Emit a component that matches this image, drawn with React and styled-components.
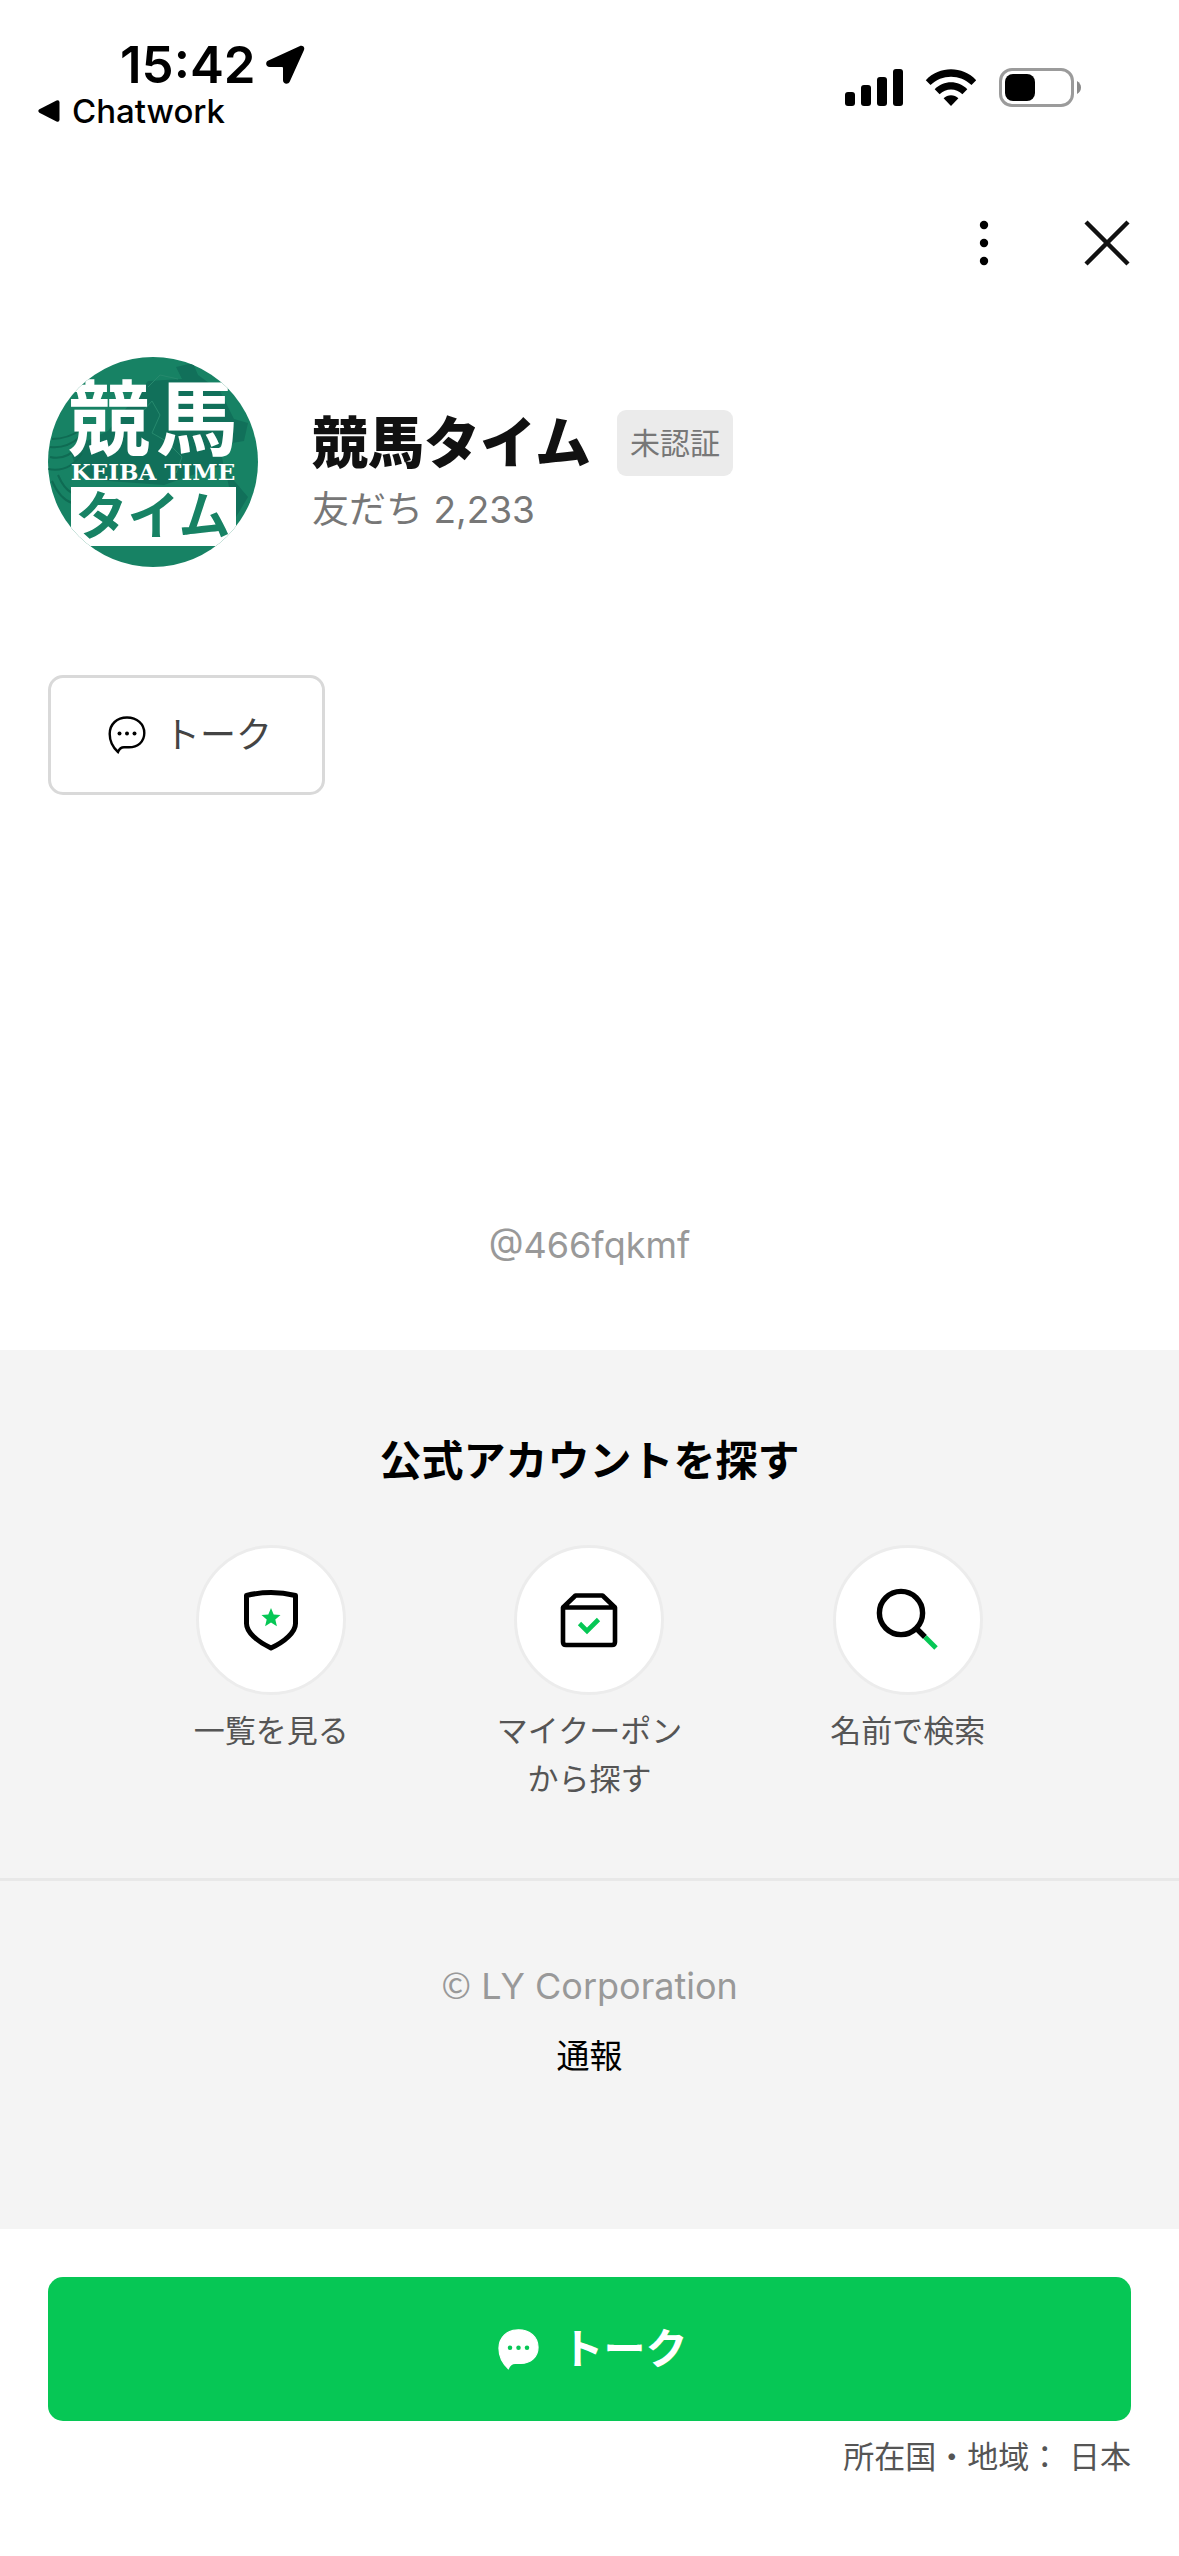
import React from "react";
import styled, { createGlobalStyle } from "styled-components";

const shortcuts = [
  { label: ["一覧を見る"], icon: ShieldIcon },
  { label: ["マイクーポン", "から探す"], icon: CouponIcon },
  { label: ["名前で検索"], icon: SearchIcon }
];

export default function App() {
  return (
    <Page>
      <GlobalStyle />
      <StatusBar>
        <StatusLeft>
          <Clock>
            15:42
            <LocationIcon />
          </Clock>
          <BackLink href="#chatwork">
            <BackIcon />
            Chatwork
          </BackLink>
        </StatusLeft>
        <StatusRight>
          <SignalIcon />
          <WifiIcon />
          <BatteryIcon />
        </StatusRight>
      </StatusBar>

      <Header>
        <IconButton type="button" aria-label="メニュー">
          <MoreIcon />
        </IconButton>
        <IconButton type="button" aria-label="閉じる">
          <CloseIcon />
        </IconButton>
      </Header>

      <Main>
        <Profile>
          <Avatar />
          <ProfileText>
            <NameRow>
              <Name>競馬タイム</Name>
              <Badge>未認証</Badge>
            </NameRow>
            <Friends>友だち 2,233</Friends>
          </ProfileText>
        </Profile>
        <TalkButton type="button">
          <TalkIcon />
          トーク
        </TalkButton>
        <AccountId>@466fqkmf</AccountId>
      </Main>

      <Explore>
        <ExploreTitle>公式アカウントを探す</ExploreTitle>
        <Shortcuts>
          {shortcuts.map(({ label, icon: Icon }) => (
            <Shortcut key={label[0]} href="#explore">
              <Circle>
                <Icon />
              </Circle>
              {label.map(line => (
                <span key={line}>{line}</span>
              ))}
            </Shortcut>
          ))}
        </Shortcuts>
      </Explore>

      <Legal>
        <Copyright>
          <CopyrightSign>©</CopyrightSign> LY Corporation
        </Copyright>
        <Report href="#report">通報</Report>
      </Legal>

      <BottomBar>
        <TalkButton type="button" $primary>
          <TalkIcon filled />
          トーク
        </TalkButton>
        <Region>所在国・地域： 日本</Region>
      </BottomBar>
    </Page>
  );
}

function LocationIcon() {
  return (
    <svg width="40" height="40" viewBox="0 0 40 40" aria-hidden="true">
      <path d="M34.5 1.2C37.6-.2 40.3 2 38.9 5.3L24.8 36.5C23.2 40 18 39.2 18 35.2V23Q18 22 17 22H4.8C.8 22-.2 17 3.4 15.5Z" />
    </svg>
  );
}

function BackIcon() {
  return (
    <svg width="22" height="22" viewBox="0 0 22 22" aria-hidden="true">
      <path d="M1.4 9.3 18.5.5Q21.5-.4 21.5 2.6V19.4Q21.5 22.4 18.5 21.5L1.4 12.7Q-.8 11 1.4 9.3Z" />
    </svg>
  );
}

function SignalIcon() {
  return (
    <svg width="58" height="38" viewBox="0 0 58 38" aria-hidden="true">
      <rect x="0" y="23" width="10" height="14" rx="3" />
      <rect x="16" y="16" width="10" height="21" rx="3" />
      <rect x="32" y="8" width="10" height="29" rx="3" />
      <rect x="48" y="0" width="10" height="37" rx="3" />
    </svg>
  );
}

function WifiIcon() {
  return (
    <svg width="52" height="38" viewBox="0 0 52 38" aria-hidden="true">
      <path d="M.8 11.2C14.5-3.3 37.5-3.3 51.2 11.2L46.5 16C35.2 4.9 16.8 4.9 5.5 16Z" />
      <path d="M9.7 20.2C18.7 11 33.3 11 42.3 20.2L37.4 25.2C31.2 18.9 20.8 18.9 14.6 25.2Z" />
      <path d="M18.6 29.2C22.7 25.1 29.3 25.1 33.4 29.2L26 37Z" />
    </svg>
  );
}

function BatteryIcon() {
  return (
    <svg width="82" height="40" viewBox="0 0 82 40" aria-hidden="true">
      <rect
        x="1.5"
        y="1.5"
        width="72"
        height="36"
        rx="11.5"
        fill="none"
        stroke="#9b9b9b"
        strokeWidth="3"
      />
      <rect x="6" y="6" width="30" height="27" rx="8" />
      <path d="M78 13Q82 15.5 82 19.5T78 26Z" fill="#8a8a8a" />
    </svg>
  );
}

function MoreIcon() {
  return (
    <svg width="48" height="48" viewBox="0 0 48 48" aria-hidden="true">
      <circle cx="24" cy="6" r="4.2" />
      <circle cx="24" cy="24" r="4.2" />
      <circle cx="24" cy="42" r="4.2" />
    </svg>
  );
}

function CloseIcon() {
  return (
    <svg width="48" height="48" viewBox="0 0 48 48" aria-hidden="true">
      <path d="M3 3 45 45M45 3 3 45" stroke="#111" strokeWidth="4.4" />
    </svg>
  );
}

function Avatar() {
  return (
    <AvatarSvg viewBox="0 0 210 210" role="img" aria-label="競馬タイム KEIBA TIME">
      <clipPath id="avatar">
        <circle cx="105" cy="105" r="105" />
      </clipPath>
      <g clipPath="url(#avatar)">
        <rect width="210" height="210" fill="#178264" />
        <g fill="#11705a">
          <path d="M128 10 145 6 150 18 172 34 186 62 200 66 196 84 172 88 176 112 200 140 188 160 176 108 150 116 116 128 60 124 30 118 22 92 60 74 84 44 100 24 134 22Z" />
        </g>
        <g fill="none" stroke="#0f6b53" strokeWidth="2">
          <path d="M0 112Q22 116 34 96M2 100Q18 104 32 88M2 90Q18 92 32 80M4 82Q20 82 34 72" />
          <path d="M4 124Q12 142 24 146M10 118Q16 132 24 136" />
        </g>
        <g fill="none" stroke="#27896d" strokeWidth="1">
          <path d="M88 62 104 44 112 58 104 76 118 84 134 100 128 116M100 30 112 18 130 22" />
        </g>
        <LogoText x="61" y="92" fontSize="82" fill="#fff">
          競
        </LogoText>
        <LogoText x="149" y="92" fontSize="82" fill="#fff">
          馬
        </LogoText>
        <LogoLatin x="105" y="123">
          KEIBA TIME
        </LogoLatin>
        <rect x="23" y="130" width="165" height="59" fill="#fff" />
        <LogoText x="105" y="178" fontSize="52" fill="#178264">
          タイム
        </LogoText>
      </g>
    </AvatarSvg>
  );
}

function TalkIcon({ filled }) {
  const size = filled ? 43 : 38;
  return (
    <svg width={size} height={size} viewBox="0 0 38 38" aria-hidden="true">
      <path
        d="M19 1.5C29 1.5 36.3 8 36.3 17C36.3 26 29.5 31.3 21 31.3H16C13 31.3 11.5 32.5 10 36C5 31.5 1.7 25 1.7 18C1.7 8 9 1.5 19 1.5Z"
        fill={filled ? "#fff" : "none"}
        stroke={filled ? "#fff" : "#000"}
        strokeWidth={filled ? 1 : 2.4}
      />
      <g fill={filled ? "#06c755" : "#000"}>
        <circle cx="11.5" cy="17.5" r="2" />
        <circle cx="19" cy="17.5" r="2" />
        <circle cx="26.5" cy="17.5" r="2" />
      </g>
    </svg>
  );
}

function ShieldIcon() {
  return (
    <svg width="72" height="72" viewBox="0 0 72 72" aria-hidden="true">
      <path
        d="M11.5 11.5Q36 5.5 60.5 11.5V39.5C60.5 48 50 57.5 36 64C22 57.5 11.5 48 11.5 39.5Z"
        fill="none"
        stroke="#000"
        strokeWidth="5"
        strokeLinejoin="round"
      />
      <path
        d="M36 24 38.700 30.600 45.500 31.100 40.300 35.500 41.900 42.200 36 38.600 30.100 42.200 31.700 35.500 26.500 31.100 33.300 30.600Z"
        fill="#06c755"
      />
    </svg>
  );
}

function CouponIcon() {
  return (
    <svg width="72" height="72" viewBox="0 0 72 72" aria-hidden="true">
      <g fill="none" strokeWidth="4.6">
        <path
          d="M10 23.5H62V58Q62 61 59 61H13Q10 61 10 58ZM10 23.5 22.5 11.5H49.5L62 23.5"
          stroke="#000"
          strokeLinejoin="round"
        />
        <path d="M26.5 39.5 34 47 45.5 35.5" stroke="#06c755" />
      </g>
    </svg>
  );
}

function SearchIcon() {
  return (
    <svg width="72" height="72" viewBox="0 0 72 72" aria-hidden="true">
      <g fill="none" strokeWidth="5.4">
        <circle cx="29" cy="29" r="21.6" stroke="#000" />
        <path d="M44.5 44.5 53 53" stroke="#000" />
        <path d="M53 53 64 64" stroke="#06c755" strokeWidth="5" />
      </g>
    </svg>
  );
}

const GlobalStyle = createGlobalStyle`
  * {
    box-sizing: border-box;
  }

  body {
    margin: 0;
    background: #fff;
    color: #000;
    font-family: Inter, "Noto Sans CJK JP", sans-serif;
  }

  svg {
    display: block;
    flex: none;
  }

  a {
    color: inherit;
    text-decoration: none;
  }

  button {
    font: inherit;
    cursor: pointer;
  }
`;

const Page = styled.div`
  display: flex;
  flex-direction: column;
  min-height: 100vh;
`;

const StatusBar = styled.div`
  display: flex;
  justify-content: space-between;
  padding: 39px 98px 0 38px;
`;

const StatusLeft = styled.div`
  display: flex;
  flex-direction: column;
`;

const Clock = styled.div`
  display: flex;
  align-items: center;
  gap: 9px;
  padding-left: 82px;
  font-size: 51px;
  font-weight: 600;
  line-height: 52px;
`;

const BackLink = styled.a`
  display: flex;
  align-items: center;
  gap: 12px;
  font-size: 33px;
  font-weight: 500;
  line-height: 40px;
`;

const StatusRight = styled.div`
  display: flex;
  align-items: center;
  gap: 22px;
  padding-top: 6px;
`;

const Header = styled.header`
  display: flex;
  justify-content: flex-end;
  gap: 59px;
  padding: 80px 40px 82px;
`;

const IconButton = styled.button`
  display: flex;
  padding: 8px;
  border: 0;
  background: none;
`;

const Main = styled.main`
  display: flex;
  flex-direction: column;
  padding: 0 48px 78px;
`;

const Profile = styled.section`
  display: flex;
  align-items: center;
  gap: 54px;
  margin-bottom: 108px;
`;

const AvatarSvg = styled.svg`
  width: 210px;
  height: 210px;
`;

const LogoText = styled.text`
  font-family: "Noto Sans CJK JP", sans-serif;
  font-weight: 700;
  text-anchor: middle;
`;

const LogoLatin = styled.text`
  fill: #fff;
  font-family: "DejaVu Serif", serif;
  font-size: 23px;
  font-weight: 700;
  text-anchor: middle;
`;

const ProfileText = styled.div`
  display: flex;
  flex-direction: column;
  padding-top: 30px;
`;

const NameRow = styled.div`
  display: flex;
  align-items: center;
  gap: 26px;
`;

const Name = styled.h1`
  margin: 0;
  color: #111;
  font-size: 56px;
  font-weight: 900;
  line-height: 66px;
`;

const Badge = styled.span`
  padding: 0 13px;
  border-radius: 9px;
  background: #ebebeb;
  color: #777;
  font-size: 30px;
  line-height: 66px;
`;

const Friends = styled.p`
  margin: 0;
  padding: 8px 0;
  color: #777;
  font-size: 37px;
  line-height: 52px;
`;

const TalkButton = styled.button`
  display: flex;
  align-items: center;
  align-self: ${props => (props.$primary ? "stretch" : "flex-start")};
  justify-content: center;
  gap: ${props => (props.$primary ? "21px" : "18px")};
  padding: ${props => (props.$primary ? "45px 48px 45px 54px" : "30px 50px 30px 57px")};
  border: ${props => (props.$primary ? "0" : "3px solid #d9d9d9")};
  border-radius: 15px;
  background: ${props => (props.$primary ? "#06c755" : "#fff")};
  color: ${props => (props.$primary ? "#fff" : "#444")};
  font-size: ${props => (props.$primary ? "42px" : "36px")};
  font-weight: ${props => (props.$primary ? 700 : 400)};
  line-height: 54px;
`;

const AccountId = styled.p`
  margin: 423px 0 0;
  color: #999;
  font-size: 36px;
  line-height: 54px;
  text-align: center;
`;

const Explore = styled.section`
  padding: 81px 112px 75px;
  border-bottom: 3px solid #e8e8e8;
  background: #f4f4f4;
`;

const ExploreTitle = styled.h2`
  margin: 0 0 54px;
  font-size: 42px;
  font-weight: 700;
  line-height: 60px;
  text-align: center;
`;

const Shortcuts = styled.nav`
  display: grid;
  grid-template-columns: repeat(3, 1fr);
`;

const Shortcut = styled.a`
  display: flex;
  flex-direction: column;
  align-items: center;
  color: #555;
  font-size: 31px;
  line-height: 48px;
`;

const Circle = styled.span`
  display: flex;
  align-items: center;
  justify-content: center;
  width: 150px;
  height: 150px;
  margin-bottom: 12px;
  border: 3px solid #ececec;
  border-radius: 50%;
  background: #fff;
`;

const Legal = styled.section`
  display: flex;
  flex-direction: column;
  align-items: center;
  gap: 16px;
  padding: 78px 48px 146px;
  background: #f4f4f4;
`;

const Copyright = styled.small`
  color: #999;
  font-size: 36px;
  line-height: 54px;
`;

const CopyrightSign = styled.span`
  font-family: "Noto Sans CJK JP", sans-serif;
  line-height: 1;
`;

const Report = styled.a`
  font-size: 33px;
  line-height: 54px;
`;

const BottomBar = styled.footer`
  display: flex;
  flex-direction: column;
  gap: 12px;
  padding: 48px;
`;

const Region = styled.p`
  margin: 0;
  color: #555;
  font-size: 31px;
  line-height: 48px;
  text-align: right;
`;
